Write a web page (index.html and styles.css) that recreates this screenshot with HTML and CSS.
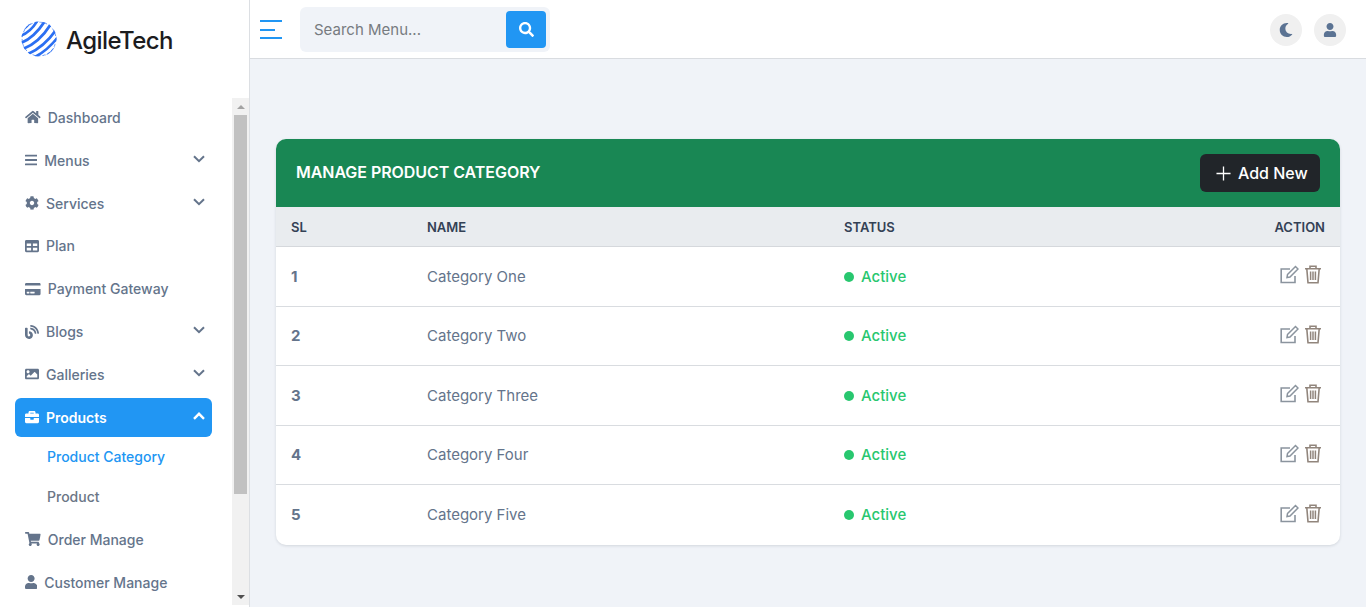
FILE: index.html
```html
<!DOCTYPE html>
<html lang="en">
<head>
<meta charset="utf-8">
<title>AgileTech - Manage Product Category</title>
<link rel="stylesheet" href="styles.css">
</head>
<body>
<svg class="defs" width="0" height="0" aria-hidden="true">
  <defs>
    <symbol id="i-home" viewBox="0 0 576 512"><path d="M280.37 148.26L96 300.11V464a16 16 0 0 0 16 16l112.06-.29a16 16 0 0 0 15.92-16V368a16 16 0 0 1 16-16h64a16 16 0 0 1 16 16v95.64a16 16 0 0 0 16 16.05L464 480a16 16 0 0 0 16-16V300L295.67 148.26a12.19 12.19 0 0 0-15.3 0zM571.6 251.47L488 182.56V44.05a12 12 0 0 0-12-12h-56a12 12 0 0 0-12 12v72.61L318.47 43a48 48 0 0 0-61 0L4.34 251.47a12 12 0 0 0-1.6 16.9l25.5 31A12 12 0 0 0 45.15 301l235.22-193.74a12.19 12.19 0 0 1 15.3 0L530.9 301a12 12 0 0 0 16.9-1.6l25.5-31a12 12 0 0 0-1.7-16.93z"/></symbol>
    <symbol id="i-bars" viewBox="0 0 448 512"><path d="M16 132h416c8.837 0 16-7.163 16-16V76c0-8.837-7.163-16-16-16H16C7.163 60 0 67.163 0 76v40c0 8.837 7.163 16 16 16zm0 160h416c8.837 0 16-7.163 16-16v-40c0-8.837-7.163-16-16-16H16c-8.837 0-16 7.163-16 16v40c0 8.837 7.163 16 16 16zm0 160h416c8.837 0 16-7.163 16-16v-40c0-8.837-7.163-16-16-16H16c-8.837 0-16 7.163-16 16v40c0 8.837 7.163 16 16 16z"/></symbol>
    <symbol id="i-cog" viewBox="0 0 512 512"><path d="M487.4 315.7l-42.6-24.6c4.3-23.2 4.3-47 0-70.2l42.6-24.6c4.9-2.8 7.1-8.6 5.5-14-11.1-35.6-30-67.8-54.7-94.6-3.8-4.1-10-5.1-14.8-2.3L380.8 110c-17.9-15.4-38.5-27.3-60.8-35.1V25.8c0-5.6-3.9-10.5-9.4-11.7-36.7-8.2-74.3-7.8-109.2 0-5.5 1.2-9.4 6.1-9.4 11.7V75c-22.2 7.9-42.8 19.8-60.8 35.1L88.7 85.5c-4.9-2.8-11-1.9-14.8 2.3-24.7 26.7-43.6 58.9-54.7 94.6-1.7 5.4.6 11.2 5.5 14L67.3 221c-4.3 23.2-4.3 47 0 70.2l-42.6 24.6c-4.9 2.8-7.1 8.6-5.5 14 11.1 35.6 30 67.8 54.7 94.6 3.8 4.1 10 5.1 14.8 2.3l42.6-24.6c17.9 15.4 38.5 27.3 60.8 35.1v49.2c0 5.6 3.9 10.5 9.4 11.7 36.7 8.2 74.3 7.8 109.2 0 5.5-1.2 9.4-6.1 9.4-11.7v-49.2c22.2-7.9 42.8-19.8 60.8-35.1l42.6 24.6c4.9 2.8 11 1.9 14.8-2.3 24.7-26.7 43.6-58.9 54.7-94.6 1.5-5.5-.7-11.3-5.6-14.1zM256 336c-44.1 0-80-35.9-80-80s35.9-80 80-80 80 35.9 80 80-35.9 80-80 80z"/></symbol>
    <symbol id="i-table" viewBox="0 0 512 512"><path d="M464 32H48C21.49 32 0 53.49 0 80v352c0 26.51 21.49 48 48 48h416c26.51 0 48-21.49 48-48V80c0-26.51-21.49-48-48-48zM224 416H64v-96h160v96zm0-160H64v-96h160v96zm224 160H288v-96h160v96zm0-160H288v-96h160v96z"/></symbol>
    <symbol id="i-card" viewBox="0 0 576 512"><path d="M0 432c0 26.5 21.5 48 48 48h480c26.5 0 48-21.5 48-48V256H0v176zm192-68c0-6.6 5.4-12 12-12h136c6.6 0 12 5.4 12 12v40c0 6.6-5.4 12-12 12H204c-6.6 0-12-5.4-12-12v-40zm-128 0c0-6.6 5.4-12 12-12h72c6.6 0 12 5.4 12 12v40c0 6.6-5.4 12-12 12H76c-6.6 0-12-5.4-12-12v-40zM576 80v48H0V80c0-26.5 21.5-48 48-48h480c26.5 0 48 21.5 48 48z"/></symbol>
    <symbol id="i-blog" viewBox="0 0 512 512"><path d="M172.2 226.8c-14.6-2.9-28.2 8.9-28.2 23.8V301c0 10.2 7.1 18.4 16.7 22 18.2 6.8 31.3 24.4 31.3 45 0 26.5-21.5 48-48 48s-48-21.5-48-48V120c0-13.3-10.7-24-24-24H24c-13.3 0-24 10.7-24 24v248c0 89.5 82.1 160.2 175 140.7 54.4-11.4 98.3-55.4 109.7-109.7 17.4-82.9-37-157.2-112.5-172.2zM209 0c-9.2-.5-17 6.8-17 16v31.6c0 8.5 6.6 15.5 15 15.9 129.4 7 233.4 112 240.9 241.5.5 8.4 7.5 15 15.9 15h32.1c9.2 0 16.5-7.8 16-17C503.4 139.8 372.2 8.6 209 0zm.3 96c-9.3-.7-17.3 6.7-17.3 16.1v32.1c0 8.4 6.5 15.3 14.8 15.9 76.8 6.3 138 68.2 144.9 145.2.8 8.3 7.6 14.7 15.9 14.7h32.2c9.3 0 16.8-8 16.1-17.3-8.4-110.1-96.5-198.2-206.6-206.7z"/></symbol>
    <symbol id="i-image" viewBox="0 0 512 512"><path d="M464 448H48c-26.51 0-48-21.49-48-48V112c0-26.51 21.49-48 48-48h416c26.51 0 48 21.49 48 48v288c0 26.51-21.49 48-48 48zM112 120c-30.928 0-56 25.072-56 56s25.072 56 56 56 56-25.072 56-56-25.072-56-56-56zM64 384h384V272l-87.515-87.515c-4.686-4.686-12.284-4.686-16.971 0L208 320l-55.515-55.515c-4.686-4.686-12.284-4.686-16.971 0L64 336v48z"/></symbol>
    <symbol id="i-case" viewBox="0 0 512 512"><path d="M320 336c0 8.84-7.16 16-16 16h-96c-8.84 0-16-7.16-16-16v-48H0v144c0 25.6 22.4 48 48 48h416c25.6 0 48-22.4 48-48V288H320v48zm144-208h-80V80c0-25.6-22.4-48-48-48H176c-25.6 0-48 22.4-48 48v48H48c-25.6 0-48 22.4-48 48v80h512v-80c0-25.6-22.4-48-48-48zm-144 0H192V96h128v32z"/></symbol>
    <symbol id="i-cart" viewBox="0 0 576 512"><path d="M528.12 301.319l47.273-208C578.806 78.301 567.391 64 551.99 64H159.208l-9.166-44.81C147.758 8.021 137.93 0 126.529 0H24C10.745 0 0 10.745 0 24v16c0 13.255 10.745 24 24 24h69.883l70.248 343.435C147.325 417.1 136 435.222 136 456c0 30.928 25.072 56 56 56s56-25.072 56-56c0-15.674-6.447-29.835-16.824-40h209.647C430.447 426.165 424 440.326 424 456c0 30.928 25.072 56 56 56s56-25.072 56-56c0-22.172-12.888-41.332-31.579-50.405l5.517-24.276c3.413-15.018-8.002-29.319-23.403-29.319H218.117l-6.545-32h293.145c11.206 0 20.92-7.754 23.403-18.681z"/></symbol>
    <symbol id="i-user" viewBox="0 0 448 512"><path d="M224 256c70.7 0 128-57.3 128-128S294.7 0 224 0 96 57.3 96 128s57.3 128 128 128zm89.6 32h-16.7c-22.2 10.2-46.9 16-72.9 16s-50.6-5.8-72.9-16h-16.7C60.2 288 0 348.2 0 422.4V464c0 26.5 21.5 48 48 48h352c26.5 0 48-21.5 48-48v-41.6c0-74.2-60.2-134.4-134.4-134.4z"/></symbol>
    <symbol id="i-moon" viewBox="0 0 512 512"><path d="M283.211 512c78.962 0 151.079-35.925 198.857-94.792 7.068-8.708-.639-21.43-11.562-19.35-124.203 23.654-238.262-71.576-238.262-196.954 0-72.222 38.662-138.635 101.498-174.394 9.686-5.512 7.25-20.197-3.756-22.23A258.156 258.156 0 0 0 283.211 0c-141.309 0-256 114.511-256 256 0 141.309 114.511 256 256 256z"/></symbol>
    <symbol id="i-search" viewBox="0 0 512 512"><path d="M505 442.7L405.3 343c-4.5-4.5-10.6-7-17-7H372c27.6-35.3 44-79.7 44-128C416 93.1 322.9 0 208 0S0 93.1 0 208s93.1 208 208 208c48.3 0 92.7-16.4 128-44v16.3c0 6.4 2.5 12.5 7 17l99.7 99.7c9.4 9.4 24.6 9.4 33.9 0l28.3-28.3c9.4-9.4 9.4-24.6.1-34zM208 336c-70.7 0-128-57.2-128-128 0-70.7 57.2-128 128-128 70.7 0 128 57.2 128 128 0 70.7-57.2 128-128 128z"/></symbol>
    <symbol id="i-down" viewBox="0 0 12 8"><path d="M1 1.2 L6 6.2 L11 1.2" fill="none" stroke="currentColor" stroke-width="2"/></symbol>
    <symbol id="i-up" viewBox="0 0 12 8"><path d="M1 6.8 L6 1.8 L11 6.8" fill="none" stroke="currentColor" stroke-width="2.4"/></symbol>
    <symbol id="i-edit" viewBox="0 0 19 19"><path d="M15 11v6.5H1.2V4H10" fill="none" stroke="currentColor" stroke-width="1.6"/><path d="M7.5 9.5 L15.5 1.5 L18 4 L10 12 L7 12.5 Z" fill="none" stroke="currentColor" stroke-width="1.5"/></symbol>
    <symbol id="i-trash" viewBox="0 0 18 19"><path d="M1 3.7H17M6 3.7V1.2H12V3.7" fill="none" stroke="currentColor" stroke-width="1.6"/><path d="M2.8 3.7 L4 17.8H14L15.2 3.7" fill="none" stroke="currentColor" stroke-width="1.6"/><path d="M6.6 6.5V15M9 6.5V15M11.4 6.5V15" fill="none" stroke="currentColor" stroke-width="1.5"/></symbol>
  </defs>
</svg>
<div class="app">
  <aside class="sidebar">
    <div class="brand">
      <svg class="brand-mark" viewBox="0 0 36 36" aria-hidden="true">
        <defs><clipPath id="globe"><circle cx="18" cy="18" r="17.6"/></clipPath></defs>
        <g clip-path="url(#globe)" fill="none" stroke="#2b6ff2">
          <circle cx="18" cy="18" r="17" stroke-width="0.8" stroke-dasharray="3 2"/>
          <path stroke-width="2.4" d="M-1 9 Q5 8 10 0"/>
          <path stroke-width="2.6" d="M-1 15 Q9 12 17 -1"/>
          <path stroke-width="2.8" d="M0 22 Q13 17 24 0"/>
          <path stroke-width="2.8" d="M2 28 Q18 22 30 3"/>
          <path stroke-width="2.8" d="M7 33 Q23 26 35 9"/>
          <path stroke-width="2.6" d="M14 36 Q27 29 37 16"/>
          <path stroke-width="2.4" d="M23 37 Q31 32 37 24"/>
        </g>
      </svg>
      <span class="brand-name">AgileTech</span>
    </div>
    <div class="side-body">
      <nav class="menu">
        <a class="item"><svg class="ico w-l"><use href="#i-home"/></svg><span>Dashboard</span></a>
        <a class="item"><svg class="ico w-s"><use href="#i-bars"/></svg><span>Menus</span><svg class="chev"><use href="#i-down"/></svg></a>
        <a class="item"><svg class="ico w-m"><use href="#i-cog"/></svg><span>Services</span><svg class="chev"><use href="#i-down"/></svg></a>
        <a class="item"><svg class="ico w-m"><use href="#i-table"/></svg><span>Plan</span></a>
        <a class="item"><svg class="ico w-l"><use href="#i-card"/></svg><span>Payment Gateway</span></a>
        <a class="item"><svg class="ico w-m"><use href="#i-blog"/></svg><span>Blogs</span><svg class="chev"><use href="#i-down"/></svg></a>
        <a class="item"><svg class="ico w-m"><use href="#i-image"/></svg><span>Galleries</span><svg class="chev"><use href="#i-down"/></svg></a>
        <a class="item active"><svg class="ico w-m"><use href="#i-case"/></svg><span>Products</span><svg class="chev"><use href="#i-up"/></svg></a>
        <a class="sub current">Product Category</a>
        <a class="sub">Product</a>
        <a class="item after-sub"><svg class="ico w-l"><use href="#i-cart"/></svg><span>Order Manage</span></a>
        <a class="item"><svg class="ico w-s"><use href="#i-user"/></svg><span>Customer Manage</span></a>
      </nav>
      <div class="scrollbar" aria-hidden="true">
        <span class="sb-btn"><i class="tri-up"></i></span>
        <span class="sb-thumb"></span>
        <span class="sb-btn sb-end"><i class="tri-down"></i></span>
      </div>
    </div>
  </aside>
  <div class="main">
    <header class="topbar">
      <button class="burger" type="button" aria-label="Toggle menu"><i></i><i class="short"></i><i></i></button>
      <form class="search">
        <input class="search-input" type="text" placeholder="Search Menu...">
        <button class="search-btn" type="button" aria-label="Search"><svg class="search-ico"><use href="#i-search"/></svg></button>
      </form>
      <div class="top-actions">
        <button class="round" type="button" aria-label="Theme"><svg class="round-ico"><use href="#i-moon"/></svg></button>
        <button class="round" type="button" aria-label="Account"><svg class="round-ico"><use href="#i-user"/></svg></button>
      </div>
    </header>
    <main class="content">
      <section class="card">
        <div class="card-head">
          <h1 class="card-title">Manage Product Category</h1>
          <button class="add-btn" type="button"><svg class="plus" viewBox="0 0 16 16"><path d="M8 0.5V15.5M0.5 8H15.5" stroke="currentColor" stroke-width="1.4"/></svg>Add New</button>
        </div>
        <table class="grid">
          <thead>
            <tr><th class="c-sl">SL</th><th class="c-name">Name</th><th class="c-status">Status</th><th class="c-action">Action</th></tr>
          </thead>
          <tbody>
            <tr><td class="num">1</td><td>Category One</td><td><span class="status">Active</span></td><td class="c-action"><span class="acts"><svg class="edit"><use href="#i-edit"/></svg><svg class="trash"><use href="#i-trash"/></svg></span></td></tr>
            <tr><td class="num">2</td><td>Category Two</td><td><span class="status">Active</span></td><td class="c-action"><span class="acts"><svg class="edit"><use href="#i-edit"/></svg><svg class="trash"><use href="#i-trash"/></svg></span></td></tr>
            <tr><td class="num">3</td><td>Category Three</td><td><span class="status">Active</span></td><td class="c-action"><span class="acts"><svg class="edit"><use href="#i-edit"/></svg><svg class="trash"><use href="#i-trash"/></svg></span></td></tr>
            <tr><td class="num">4</td><td>Category Four</td><td><span class="status">Active</span></td><td class="c-action"><span class="acts"><svg class="edit"><use href="#i-edit"/></svg><svg class="trash"><use href="#i-trash"/></svg></span></td></tr>
            <tr><td class="num">5</td><td>Category Five</td><td><span class="status">Active</span></td><td class="c-action"><span class="acts"><svg class="edit"><use href="#i-edit"/></svg><svg class="trash"><use href="#i-trash"/></svg></span></td></tr>
          </tbody>
        </table>
      </section>
    </main>
  </div>
</div>
</body>
</html>
```

FILE: styles.css
```css
* { box-sizing: border-box; }
html, body { margin: 0; height: 100%; overflow: hidden; }
body { font-family: Inter, "Liberation Sans", sans-serif; color: #64748b; background: #f0f3f8; }
.defs { position: absolute; }
.app { display: flex; height: 100vh; }

.sidebar { width: 250px; flex: none; background: #fff; border-right: 1px solid #dcdfe3; display: flex; flex-direction: column; height: 100%; }
.brand { height: 98px; flex: none; display: flex; align-items: flex-start; padding: 21px 0 0 21px; gap: 9px; }
.brand-mark { width: 36px; height: 36px; flex: none; }
.brand-name { font-size: 24px; font-weight: 500; color: #1c1c1e; line-height: 40px; letter-spacing: -0.6px; }

.side-body { flex: 1; min-height: 0; display: flex; padding-bottom: 2px; }
.menu { flex: 1; min-width: 0; overflow: hidden; padding: 0 20px 0 15px; margin-top: -0.1px; }
.item { display: flex; align-items: center; gap: 7px; height: 39px; padding: 0 7px 0 10px; margin-bottom: 3.85px; border-radius: 6px; font-size: 14px; font-weight: 500; color: #64748b; }
.item.active { background: #2196f3; color: #fff; font-weight: 600; margin-bottom: 0; }
.item.after-sub { margin-top: 4px; }
.ico { height: 14px; flex: none; fill: currentColor; }
.w-l { width: 15.75px; }
.w-m { width: 14px; }
.w-s { width: 12.25px; }
.chev { width: 12px; height: 8px; margin-left: auto; margin-top: -3px; flex: none; }
.sub { display: flex; align-items: center; height: 39.5px; padding-left: 32px; font-size: 14px; font-weight: 500; color: #6b7686; }
.sub.current { color: #2196f3; }

.scrollbar { width: 17px; flex: none; background: #f1f1f1; display: flex; flex-direction: column; align-items: center; }
.sb-btn { width: 17px; height: 17px; flex: none; display: flex; align-items: center; justify-content: center; }
.sb-end { margin-top: auto; }
.sb-thumb { width: 13px; height: 379px; flex: none; background: #c1c1c1; }
.tri-up { width: 0; height: 0; border: 4px solid transparent; border-top: 0; border-bottom: 4px solid #a3a3a3; }
.tri-down { width: 0; height: 0; border: 4px solid transparent; border-bottom: 0; border-top: 4px solid #505050; }

.main { flex: 1; min-width: 0; display: flex; flex-direction: column; }
.topbar { height: 59px; flex: none; background: #fff; border-bottom: 1px solid #d9dce0; display: flex; align-items: center; padding: 1px 20px 0 10px; }
.burger { width: 22px; height: 19px; padding: 0; border: 0; background: none; display: flex; flex-direction: column; justify-content: space-between; }
.burger i { display: block; height: 2px; width: 22px; background: #2196f3; }
.burger i.short { width: 15px; }
.search { margin-left: 18px; width: 250px; height: 45px; background: #f0f3f8; border-radius: 6px; display: flex; align-items: center; padding: 0 4px 0 14px; }
.search-input { flex: 1; min-width: 0; border: 0; background: none; outline: 0; padding: 0; font: 400 15px Inter, "Liberation Sans", sans-serif; color: #6c757d; }
.search-input::placeholder { color: #777b80; opacity: 1; }
.search-btn { width: 40px; height: 37px; border: 0; padding: 0; border-radius: 4px; background: #2196f3; display: flex; align-items: center; justify-content: center; }
.search-ico { width: 15px; height: 15px; fill: #fff; }
.top-actions { margin-left: auto; display: flex; gap: 12px; }
.round { width: 32px; height: 32px; border: 0; padding: 0; border-radius: 50%; background: #f0f0f0; display: flex; align-items: center; justify-content: center; color: #5b7393; }
.round-ico { width: 14px; height: 14px; fill: currentColor; }

.content { flex: 1; min-height: 0; padding: 80px 26px 0; }
.card { background: #fff; border-radius: 10px; overflow: hidden; box-shadow: 0 1px 3px rgba(30, 40, 60, .14); }
.card-head { height: 68px; background: #198754; display: flex; align-items: center; justify-content: space-between; padding: 0 20px; }
.card-title { margin: -2px 0 0; font-size: 16px; font-weight: 600; color: #fff; text-transform: uppercase; letter-spacing: -0.05px; }
.add-btn { height: 38px; width: 120px; border: 0; border-radius: 6px; background: #212529; color: #fff; font: 500 16px Inter, "Liberation Sans", sans-serif; display: flex; align-items: center; justify-content: flex-start; gap: 7px; padding: 0 0 0 16px; }
.plus { width: 15px; height: 15px; }

.grid { width: 100%; border-collapse: collapse; table-layout: fixed; }
.grid th { height: 39.5px; padding: 0 15px; background: #e9ecef; border-bottom: 1px solid #d5d8dc; font-size: 13px; font-weight: 600; color: #334155; text-transform: uppercase; text-align: left; }
.c-sl { width: 136px; }
.c-name { width: 417px; }
.c-status { width: 200px; }
.grid th.c-action, .grid td.c-action { text-align: right; }
.grid td { height: 59.5px; padding: 0 15px; border-bottom: 1px solid #d9dce0; font-size: 15px; color: #64748b; }
.grid tbody tr:last-child td { border-bottom: 0; height: 60px; }
.grid td.num { font-weight: 700; }
.status { color: #28c76f; font-weight: 500; }
.status::before { content: ""; display: inline-block; width: 10px; height: 10px; margin-right: 7px; border-radius: 50%; background: #28c76f; vertical-align: 0; }
.acts { display: inline-flex; align-items: center; gap: 5px; margin: -6px 3px 0 0; vertical-align: middle; }
.edit { width: 19px; height: 19px; color: #8b949e; }
.trash { width: 18px; height: 19px; color: #91857c; }
```
